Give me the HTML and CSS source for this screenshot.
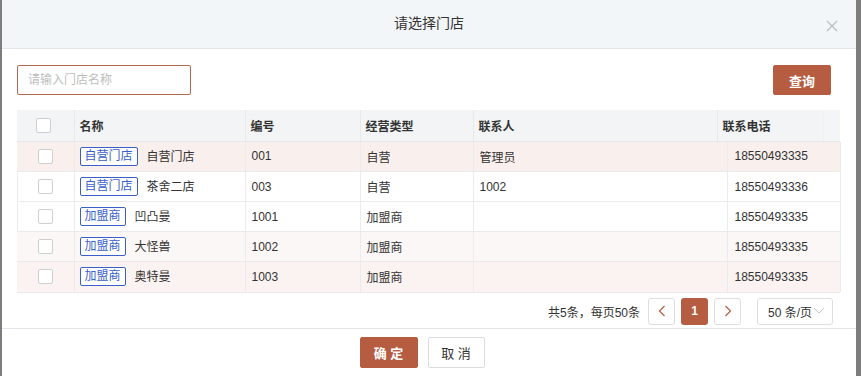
FILE: index.html
```html
<!DOCTYPE html>
<html lang="zh-CN">
<head>
    <meta charset="UTF-8">
    <title>请选择门店</title>
    <link rel="stylesheet" href="styles.css">
</head>
<body>
    <div class="dialog">
        <div class="dialog-header">
            <span class="dialog-title">请选择门店</span>
            <span class="dialog-close">
                <svg width="12" height="12" viewBox="0 0 12 12"><path d="M1 1L11 11M11 1L1 11" stroke="#b9bcc0" stroke-width="1.2" fill="none"/></svg>
            </span>
        </div>
        <div class="dialog-body">
            <div class="toolbar">
                <input class="search-input" type="text" placeholder="请输入门店名称">
                <button class="btn btn-primary btn-query">查询</button>
            </div>

            <div class="grid">
                <table class="grid-head">
                    <colgroup>
                        <col style="width:57px"><col style="width:171px"><col style="width:115px">
                        <col style="width:113px"><col style="width:244px"><col style="width:106px"><col style="width:17px">
                    </colgroup>
                    <tr>
                        <th class="cell-check"><span class="checkbox"></span></th>
                        <th>名称</th>
                        <th>编号</th>
                        <th>经营类型</th>
                        <th>联系人</th>
                        <th class="last">联系电话</th>
                        <th class="gutter"></th>
                    </tr>
                </table>
                <table class="grid-body">
                    <colgroup>
                        <col style="width:57px"><col style="width:171px"><col style="width:115px">
                        <col style="width:113px"><col style="width:254px"><col style="width:113px">
                    </colgroup>
                    <tr class="row-active">
                        <td class="cell-check"><span class="checkbox"></span></td>
                        <td><span class="tag">自营门店</span>自营门店</td>
                        <td>001</td>
                        <td>自营</td>
                        <td>管理员</td>
                        <td class="cell-phone">18550493335</td>
                    </tr>
                    <tr>
                        <td class="cell-check"><span class="checkbox"></span></td>
                        <td><span class="tag">自营门店</span>茶舍二店</td>
                        <td>003</td>
                        <td>自营</td>
                        <td>1002</td>
                        <td class="cell-phone">18550493336</td>
                    </tr>
                    <tr>
                        <td class="cell-check"><span class="checkbox"></span></td>
                        <td><span class="tag">加盟商</span>凹凸曼</td>
                        <td>1001</td>
                        <td>加盟商</td>
                        <td></td>
                        <td class="cell-phone">18550493335</td>
                    </tr>
                    <tr class="row-light">
                        <td class="cell-check"><span class="checkbox"></span></td>
                        <td><span class="tag">加盟商</span>大怪兽</td>
                        <td>1002</td>
                        <td>加盟商</td>
                        <td></td>
                        <td class="cell-phone">18550493335</td>
                    </tr>
                    <tr class="row-soft">
                        <td class="cell-check"><span class="checkbox"></span></td>
                        <td><span class="tag">加盟商</span>奥特曼</td>
                        <td>1003</td>
                        <td>加盟商</td>
                        <td></td>
                        <td class="cell-phone">18550493335</td>
                    </tr>
                </table>
            </div>

            <div class="pager">
                <span class="pager-total">共5条，每页50条</span>
                <span class="pager-btn pager-arrow">
                    <svg width="8" height="12" viewBox="0 0 8 12"><path d="M6.5 1L1.5 6L6.5 11" stroke="#b65c41" stroke-width="1.2" fill="none"/></svg>
                </span>
                <span class="pager-btn pager-current">1</span>
                <span class="pager-btn pager-arrow">
                    <svg width="8" height="12" viewBox="0 0 8 12"><path d="M1.5 1L6.5 6L1.5 11" stroke="#b65c41" stroke-width="1.2" fill="none"/></svg>
                </span>
                <span class="pager-size">50 条/页
                    <svg width="12" height="8" viewBox="0 0 12 8"><path d="M1 1L6 6L11 1" stroke="#c4c4c4" stroke-width="1" fill="none"/></svg>
                </span>
            </div>
        </div>
        <div class="dialog-footer">
            <button class="btn btn-primary btn-wide">确 定</button>
            <button class="btn btn-default btn-wide">取 消</button>
        </div>
    </div>
</body>
</html>
```

FILE: styles.css
```css
body {
    margin: 0;
    background-color: #7d7d7d;
    font-family: "Liberation Sans", "Noto Sans CJK SC", sans-serif;
    font-size: 12px;
    color: #333;
    overflow: hidden;
}

.dialog {
    margin-left: 2px;
    width: 854px;
    height: 376px;
    background-color: #fff;
}

.dialog-header {
    height: 48px;
    background-color: #f3f6f9;
    border-bottom: 1px solid #e3e6ea;
    display: flex;
    align-items: center;
    justify-content: center;
    position: relative;
}

.dialog-title {
    font-size: 14px;
    color: #333;
    margin-top: -4px;
}

.dialog-close {
    position: absolute;
    right: 18px;
    top: 20px;
    display: flex;
}

.dialog-body {
    padding: 16px 16px 0 15px;
}

.toolbar {
    display: flex;
    justify-content: space-between;
    align-items: center;
    padding-right: 9px;
}

.search-input {
    box-sizing: border-box;
    width: 174px;
    height: 30px;
    border: 1px solid #b5664f;
    border-radius: 2px;
    padding: 0 10px;
    font-family: inherit;
    font-size: 12px;
    outline: none;
}

.search-input::placeholder {
    color: #bdbdbd;
}

.btn {
    box-sizing: border-box;
    height: 30px;
    border-radius: 2px;
    font-family: inherit;
    font-size: 13px;
    cursor: pointer;
    padding: 0;
}

.btn-primary {
    background-color: #b65c41;
    border: 1px solid #b65c41;
    color: #fff;
    font-weight: bold;
}

.btn-default {
    background-color: #fff;
    border: 1px solid #dcdcdc;
    color: #333;
}

.btn-query {
    width: 58px;
}

.btn-wide {
    width: 58px;
}

.grid {
    margin-top: 15px;
    width: 823px;
    border-left: 1px solid #ebebeb;
    border-bottom: 1px solid #ebebeb;
    box-sizing: border-box;
}

.grid table {
    border-collapse: collapse;
    table-layout: fixed;
    width: 823px;
    margin-left: -1px;
}

.grid-head th {
    height: 31px;
    padding: 0 5px;
    text-align: left;
    font-weight: bold;
    background-color: #f2f4f5;
    border-right: 1px solid #e6e8ea;
    border-bottom: 1px solid #e6e8ea;
    box-sizing: border-box;
    color: #333;
}

.grid-head th.last {
    border-right-color: #eef0f1;
}

.grid-head th.gutter {
    border-right: none;
    background-color: #f3f5f6;
}

.grid-body td {
    height: 30px;
    padding: 0 6px;
    border-right: 1px solid #ebebeb;
    border-bottom: 1px solid #ebebeb;
    box-sizing: border-box;
    white-space: nowrap;
}

.grid-body tr:last-child td {
    border-bottom: none;
}

.grid-body td.cell-phone {
    padding-left: 7px;
}

.grid .cell-check {
    text-align: center;
    padding: 0;
}

.grid-head .cell-check {
    padding-right: 4px;
}

.checkbox {
    display: inline-block;
    vertical-align: middle;
    width: 15px;
    height: 15px;
    box-sizing: border-box;
    border: 1px solid #cfcfcf;
    border-radius: 2px;
    background-color: #fff;
}

.row-active td {
    background-color: #f9efed;
}

.row-light td {
    background-color: #fbf7f6;
}

.row-soft td {
    background-color: #fbf3f1;
}

.tag {
    display: inline-block;
    vertical-align: middle;
    height: 19px;
    line-height: 17px;
    box-sizing: border-box;
    padding: 0 4px;
    border: 1px solid #3b5fc8;
    border-radius: 2px;
    color: #3b5fc8;
    font-size: 12px;
    margin-left: -1px;
    margin-right: 9px;
    margin-top: -2px;
    background-color: #fff;
}

.pager {
    display: flex;
    justify-content: flex-end;
    align-items: center;
    margin-top: 5px;
    height: 27px;
    padding-right: 7px;
}

.pager-total {
    margin-right: 2px;
    color: #333;
}

.pager-btn {
    box-sizing: border-box;
    width: 27px;
    height: 27px;
    border-radius: 3px;
    display: flex;
    align-items: center;
    justify-content: center;
    margin-left: 6px;
}

.pager-arrow {
    border: 1px solid #dedede;
    background-color: #fff;
}

.pager-current {
    background-color: #b65c41;
    color: #fff;
    font-weight: bold;
}

.pager-size {
    box-sizing: border-box;
    width: 76px;
    height: 27px;
    margin-left: 16px;
    border: 1px solid #dedede;
    border-radius: 3px;
    display: flex;
    align-items: center;
    padding-left: 10px;
    gap: 1px;
    color: #333;
}

.dialog-footer {
    margin-top: 3px;
    border-top: 1px solid #e3e6ea;
    padding-top: 8px;
    display: flex;
    justify-content: center;
    gap: 10px;
    padding-right: 14px;
}

.dialog-footer .btn {
    width: 58px;
    height: 31px;
}

.dialog-footer .btn-default {
    width: 57px;
}
```
